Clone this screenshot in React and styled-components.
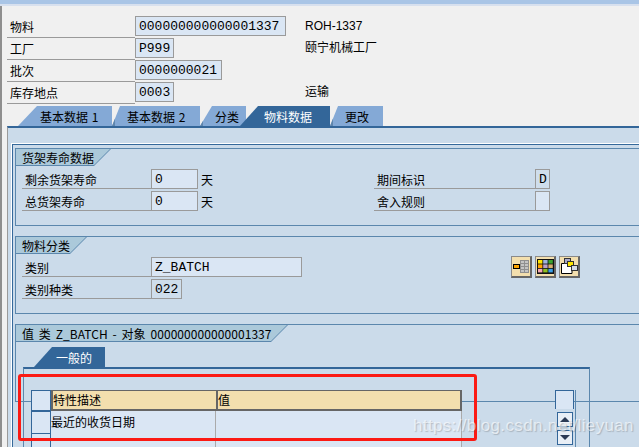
import styled, { createGlobalStyle } from 'styled-components';

const GlobalStyle = createGlobalStyle`
  html, body {
    margin: 0;
    padding: 0;
    background: #f0f0f0;
  }
  * {
    box-sizing: border-box;
  }
`;

const Page = styled.div`
  position: relative;
  width: 639px;
  height: 447px;
  overflow: hidden;
  background: #f0f0f0;
  color: #000;
  font-family: 'Noto Sans CJK SC', 'Liberation Sans', sans-serif;
  font-size: 12px;
`;

const TopBar = styled.div`
  height: 6px;
  background: #a9c5e6;
  border-bottom: 2px solid #d7e0ee;
`;

const Body = styled.div`
  height: 441px;
  border-left: 2px solid #8e8e8e;
  padding: 10px 0 0 5px;
  display: flex;
  flex-direction: column;
`;

const HeaderRow = styled.div`
  display: grid;
  grid-template-columns: 128px 170px 1fr;
  height: 20px;
  margin-bottom: 2px;
`;

const Label = styled.div`
  border-bottom: 1px solid #9a9a9a;
  padding-left: ${p => p.$indent || 3}px;
  line-height: 21px;
  white-space: nowrap;
  width: ${p => (p.$width ? `${p.$width}px` : 'auto')};
  flex: none;
`;

const Field = styled.div`
  width: ${p => p.$width}px;
  height: 20px;
  flex: none;
  border: 1px solid #9a9a9a;
  background: ${p => (p.$plain ? '#cfdeec' : '#dae6f4')};
  padding-left: 3px;
  font-family: 'Liberation Mono', monospace;
  font-size: 13px;
  line-height: 20px;
  white-space: nowrap;
  overflow: hidden;
`;

const Description = styled.div`
  line-height: 21px;
  font-family: 'Liberation Sans', 'Noto Sans CJK SC', sans-serif;
  white-space: nowrap;
`;

const Tabs = styled.div`
  display: flex;
  height: 20px;
  margin-top: 2px;
  padding-left: 11px;
  flex: none;
`;

const Tab = styled.div`
  width: ${p => p.$width}px;
  height: 20px;
  flex: none;
  margin-left: ${p => p.$overlap || 0}px;
  padding-left: ${p => p.$textLeft}px;
  line-height: 21px;
  white-space: nowrap;
  word-spacing: 1px;
  color: ${p => (p.$active ? '#fff' : '#000')};
  background: ${p =>
    p.$active
      ? '#336699'
      : p.$shade
        ? 'linear-gradient(#5f86ad, #5f86ad) left bottom / 3px 9px no-repeat, #84a9d6'
        : '#84a9d6'};
  clip-path: polygon(${p => p.$slant}px 0, 100% 0, 100% 100%, 0 100%);
  position: ${p => (p.$active ? 'relative' : 'static')};
`;

const Panel = styled.div`
  flex: 1;
  border-top: 2px solid #336699;
  border-left: 1px solid #9a9a9a;
  background: #cbdbea;
  padding: 16px 0 0 4px;
  overflow: hidden;
`;

const Frame = styled.div`
  height: 320px;
  margin-right: -10px;
  border-top: 1px solid #35699b;
  border-left: 1px solid #35699b;
  box-shadow: -1px -1px 0 #fff;
  padding: 3px 0 0 2px;
  display: flex;
  flex-direction: column;
  gap: 10px;
`;

const Group = styled.section`
  height: 78px;
  flex: none;
  border: 1px solid #5b87ad;
  padding-bottom: 3px;
`;

const GroupTitleEdge = styled.div`
  width: ${p => p.$width}px;
  height: 17px;
  padding: 0 1px 1px 0;
  background: #5b87ad;
  clip-path: polygon(0 0, 100% 0, calc(100% - 17px) 100%, 0 100%);
`;

const GroupTitle = styled.h3`
  height: 16px;
  margin: 0;
  padding-left: 6px;
  background: #abc9da;
  clip-path: polygon(0 0, 100% 0, calc(100% - 16px) 100%, 0 100%);
  font-size: 12px;
  font-weight: 400;
  line-height: 17px;
  letter-spacing: ${p => p.$spacing || 0}px;
  word-spacing: ${p => (p.$spacing ? 2 : 0)}px;
  white-space: nowrap;
`;

const FormRow = styled.div`
  display: flex;
  height: 20px;
  margin: ${p => (p.$first ? '3px' : '2px')} 0 0 6px;
`;

const LeftCell = styled.div`
  display: flex;
  width: 352px;
  flex: none;
`;

const Unit = styled.span`
  margin-left: 3px;
  line-height: 21px;
`;

const ToolButtons = styled.div`
  display: flex;
  gap: 3px;
  margin: -1px 0 0 209px;
`;

const ToolButton = styled.button`
  width: 21px;
  height: 22px;
  padding: 0;
  display: flex;
  align-items: center;
  justify-content: center;
  background: #f3dfae;
  border: 1px solid #8a8a8a;
  border-right: 2px solid #666;
  border-bottom: 2px solid #666;
`;

const InnerTab = styled.div`
  width: 71px;
  height: 20px;
  margin: 5px 0 0 18px;
  padding-left: 22px;
  background: #336699;
  color: #fff;
  line-height: 21px;
  clip-path: polygon(18px 0, 100% 0, 100% 100%, 0 100%);
`;

const TablePanel = styled.div`
  width: 567px;
  height: 90px;
  margin-left: 7px;
  border-top: 2px solid #336699;
  border-left: 1px solid #5b87ad;
  border-right: 1px solid #5b87ad;
  padding: 21px 0 0 7px;
  display: flex;
`;

const Table = styled.div`
  width: 431px;
  flex: none;
`;

const TableRow = styled.div`
  display: grid;
  grid-template-columns: 20px 165px 246px;
  height: ${p => p.$height}px;
  margin-bottom: ${p => p.$gap || 0}px;
`;

const Selector = styled.div`
  background: #dae6f4;
  border: 1px solid #336699;
  border-bottom-width: ${p => (p.$open ? 0 : 1)}px;
`;

const HeadCell = styled.div`
  background: #f3dfae;
  border-top: 1px solid #666;
  border-bottom: 2px solid #666;
  border-left: 2px solid #666;
  border-right: ${p => (p.$last ? '2px solid #666' : '0')};
  line-height: 18px;
`;

const DataCell = styled.div`
  background: #dae6f4;
  border-bottom: 1px solid #aaa;
  border-right: 1px solid #aaa;
  line-height: 22px;
  white-space: nowrap;
`;

const ScrollColumn = styled.div`
  width: 21px;
  margin-left: 93px;
  border-right: 1px solid #5b87ad;
  display: flex;
  flex-direction: column;
  align-items: flex-start;
  padding-right: 2px;
  flex: none;
`;

const ScrollHead = styled.div`
  width: 19px;
  height: 19px;
  background: #dae6f4;
  border: 1px solid #336699;
  border-bottom: 0;
  flex: none;
`;

const ScrollButton = styled.div`
  width: 16px;
  height: 15px;
  flex: none;
  margin: ${p => p.$top}px 0 0 2px;
  background: #e9eff6;
  border: 1px solid #336699;
  display: flex;
  align-items: center;
  justify-content: center;
`;

const Arrow = styled.span`
  width: 0;
  height: 0;
  border-left: 5px solid transparent;
  border-right: 5px solid transparent;
  border-${p => (p.$down ? 'top' : 'bottom')}: 5px solid #2b3a55;
`;

const RedMark = styled.div`
  position: absolute;
  left: 18px;
  top: 374px;
  width: 459px;
  height: 67px;
  border: 3px solid #fb1a14;
  border-radius: 3px;
  pointer-events: none;
`;

const Watermark = styled.div`
  position: absolute;
  left: 413px;
  top: 416px;
  width: 217px;
  display: flex;
  justify-content: space-between;
  font-family: 'Liberation Sans', sans-serif;
  font-size: 17px;
  line-height: 20px;
  letter-spacing: 0.35px;
  color: rgba(255, 255, 255, 0.62);
  text-shadow: 1px 1px 1px rgba(90, 90, 90, 0.3);
  white-space: nowrap;
  pointer-events: none;
`;

const FieldMapIcon = () => (
  <svg width="17" height="15" viewBox="0 0 17 15">
    <g fill="#c4c4c4" stroke="#8f8f8f">
      <rect x="7.5" y="1.5" width="4" height="3" />
      <rect x="11.5" y="1.5" width="4" height="3" />
      <rect x="7.5" y="4.5" width="4" height="3" />
      <rect x="11.5" y="4.5" width="4" height="3" />
      <rect x="7.5" y="7.5" width="4" height="3" />
      <rect x="11.5" y="7.5" width="4" height="3" />
      <rect x="7.5" y="10.5" width="4" height="3" />
      <rect x="11.5" y="10.5" width="4" height="3" />
    </g>
    <rect x="0.5" y="5.5" width="6" height="4" fill="#ffa500" stroke="#000" />
  </svg>
);

const cellColors = [
  '#ffe600', '#9fb4dc', '#3aa52d',
  '#ffa500', '#b9a0c8', '#d8b070',
  '#f5a8b4', '#8fbf20', '#3a9fe8',
];

const ColorTableIcon = () => (
  <svg width="17" height="15" viewBox="0 0 17 15">
    <rect x="0.5" y="0.5" width="16" height="14" fill="#111" stroke="#111" />
    {cellColors.map((color, i) => (
      <rect key={i} x={1 + (i % 3) * 5.2} y={1 + Math.floor(i / 3) * 4.4} width="4.4" height="3.6" fill={color} />
    ))}
  </svg>
);

const CopyDocIcon = () => (
  <svg width="18" height="17" viewBox="0 0 18 17">
    <path d="M1.5 5.5 H5 V2 H7 L12 6 V15.5 H1.5 Z" fill="#fff" stroke="#000" />
    <rect x="4.5" y="0.5" width="6" height="5" fill="#a9a9c9" stroke="#333" />
    <rect x="7.5" y="3.5" width="6" height="5" fill="#ffe600" stroke="#333" />
    <rect x="11.5" y="7.5" width="6" height="5" fill="#d5dbe8" stroke="#333" />
  </svg>
);

const headerRows = [
  { label: '物料', value: '000000000000001337', width: 151, description: 'ROH-1337' },
  { label: '工厂', value: 'P999', width: 39, description: '颐宁机械工厂' },
  { label: '批次', value: '0000000021', width: 87, description: '' },
  { label: '库存地点', value: '0003', width: 39, description: '运输' },
];

const tabs = [
  { label: '基本数据 1', width: 94, slant: 19, textLeft: 22 },
  { label: '基本数据 2', width: 88, slant: 8, textLeft: 15, shade: true },
  { label: '分类', width: 46, slant: 12, textLeft: 15, shade: true },
  { label: '物料数据', width: 90, slant: 18, textLeft: 24, active: true, overlap: -6 },
  { label: '更改', width: 53, slant: 8, textLeft: 15, shade: true },
];

export default function App() {
  return (
    <Page>
      <GlobalStyle />
      <TopBar />
      <Body>
        {headerRows.map(row => (
          <HeaderRow key={row.label}>
            <Label>{row.label}</Label>
            <Field $width={row.width}>{row.value}</Field>
            <Description>{row.description}</Description>
          </HeaderRow>
        ))}

        <Tabs>
          {tabs.map(tab => (
            <Tab
              key={tab.label}
              $width={tab.width}
              $slant={tab.slant}
              $textLeft={tab.textLeft}
              $shade={tab.shade}
              $active={tab.active}
              $overlap={tab.overlap}
            >
              {tab.label}
            </Tab>
          ))}
        </Tabs>

        <Panel>
          <Frame>
            <Group>
              <GroupTitleEdge $width={95}>
                <GroupTitle>货架寿命数据</GroupTitle>
              </GroupTitleEdge>
              <FormRow $first>
                <LeftCell>
                  <Label $width={129}>剩余货架寿命</Label>
                  <Field $width={47}>0</Field>
                  <Unit>天</Unit>
                </LeftCell>
                <Label $width={161}>期间标识</Label>
                <Field $width={15} $plain>D</Field>
              </FormRow>
              <FormRow>
                <LeftCell>
                  <Label $width={129}>总货架寿命</Label>
                  <Field $width={47}>0</Field>
                  <Unit>天</Unit>
                </LeftCell>
                <Label $width={161}>舍入规则</Label>
                <Field $width={15} />
              </FormRow>
            </Group>

            <Group>
              <GroupTitleEdge $width={71}>
                <GroupTitle>物料分类</GroupTitle>
              </GroupTitleEdge>
              <FormRow $first>
                <Label $width={129}>类别</Label>
                <Field $width={151}>Z_BATCH</Field>
                <ToolButtons>
                  <ToolButton type="button" aria-label="字段"><FieldMapIcon /></ToolButton>
                  <ToolButton type="button" aria-label="表格"><ColorTableIcon /></ToolButton>
                  <ToolButton type="button" aria-label="复制"><CopyDocIcon /></ToolButton>
                </ToolButtons>
              </FormRow>
              <FormRow>
                <Label $width={129}>类别种类</Label>
                <Field $width={31} $plain>022</Field>
              </FormRow>
            </Group>

            <Group>
              <GroupTitleEdge $width={272}>
                <GroupTitle $spacing={0.07}>值 类 Z_BATCH - 对象 000000000000001337</GroupTitle>
              </GroupTitleEdge>
              <InnerTab>一般的</InnerTab>
              <TablePanel>
                <Table>
                  <TableRow $height={20} $gap={1}>
                    <Selector />
                    <HeadCell>特性描述</HeadCell>
                    <HeadCell $last>值</HeadCell>
                  </TableRow>
                  <TableRow $height={22}>
                    <Selector />
                    <DataCell>最近的收货日期</DataCell>
                    <DataCell />
                  </TableRow>
                  <TableRow $height={22}>
                    <Selector $open />
                    <DataCell />
                    <DataCell />
                  </TableRow>
                </Table>
                <ScrollColumn>
                  <ScrollHead />
                  <ScrollButton $top={3}><Arrow /></ScrollButton>
                  <ScrollButton $top={3}><Arrow $down /></ScrollButton>
                </ScrollColumn>
              </TablePanel>
            </Group>
          </Frame>
        </Panel>
      </Body>
      <RedMark />
      <Watermark>
        <span>https://blog.csdn.net/</span>
        <span>lieyuan</span>
      </Watermark>
    </Page>
  );
}
